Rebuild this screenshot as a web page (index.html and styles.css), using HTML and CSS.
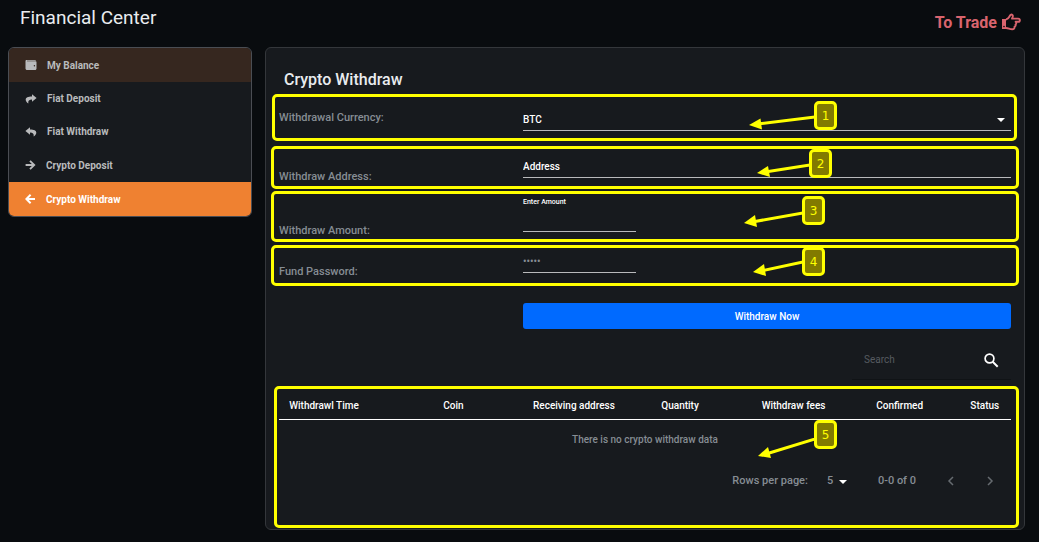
FILE: index.html
```html
<!DOCTYPE html>
<html lang="en">
<head>
<meta charset="utf-8">
<title>Financial Center</title>
<link rel="stylesheet" href="styles.css">
</head>
<body>
<header class="topbar">
  <h1 class="topbar-title">Financial Center</h1>
  <a class="trade-link" href="#">To Trade
    <svg class="hand" viewBox="0 0 20 18" aria-hidden="true"><path d="M1 6h4v10H1z" fill="currentColor"/><path d="M5 6.500C8 6 8 3.500 9.500 2c1.400-1.100 2.800.3 2.200 1.900L11 5.600h6.200c2.200 0 2.200 3.200 0 3.200H14.600c1 .8.9 2.200-.1 2.700.4 1-.1 2-1 2.200.2 1.500-.6 2.600-2.300 2.600C8.500 16.300 7.500 15 5 15" fill="none" stroke="currentColor" stroke-width="1.900" stroke-linejoin="round"/><circle cx="3" cy="13.500" r=".8" fill="#090c0f"/></svg>
  </a>
</header>
<div class="layout">
  <nav class="menu">
    <a class="menu-item menu-head" href="#"><svg class="menu-icon" viewBox="0 0 12 12" aria-hidden="true"><path d="M1.500 1h8.700c.5 0 .8.300.8.800H2v.4h8.500c.6 0 1 .4 1 1v6.300c0 .8-.6 1.500-1.400 1.500h-8C1.200 11 .5 10.300.5 9.500V2.200C.5 1.500.9 1 1.500 1z" fill="currentColor"/><circle cx="9.400" cy="6.800" r=".7" fill="#36271f"/></svg>My Balance</a>
    <a class="menu-item" href="#"><svg class="menu-icon" viewBox="0 0 12 12" aria-hidden="true"><path d="M7 1.200 11.600 5 7 8.800V6.500C4.200 6.500 3 7.500 3.300 10.500 1.800 9.600.7 8.300.7 6.800.7 4.200 3 3.400 7 3.400z" fill="currentColor"/></svg>Fiat Deposit</a>
    <a class="menu-item" href="#"><svg class="menu-icon" viewBox="0 0 12 12" aria-hidden="true"><path d="M5 1.200.4 5 5 8.800V6.500c2.800 0 4 1 3.700 4 1.500-.9 2.600-2.200 2.600-3.700C11.300 4.200 9 3.400 5 3.400z" fill="currentColor"/></svg>Fiat Withdraw</a>
    <a class="menu-item menu-tall" href="#"><svg class="menu-icon menu-icon-narrow" viewBox="0 0 11 12" aria-hidden="true"><path d="M.6 6h8.400M5 1.800 9.200 6 5 10.200" fill="none" stroke="currentColor" stroke-width="1.900"/></svg>Crypto Deposit</a>
    <a class="menu-item menu-tall menu-active" href="#" aria-current="page"><svg class="menu-icon menu-icon-narrow" viewBox="0 0 11 12" aria-hidden="true"><path d="M10 6H1.600M5.600 1.800 1.400 6l4.200 4.200" fill="none" stroke="currentColor" stroke-width="2"/></svg>Crypto Withdraw</a>
  </nav>

  <main class="panel">
    <h2 class="panel-title">Crypto Withdraw</h2>
    <form class="form">
      <div class="row row-currency">
        <label for="currency">Withdrawal Currency:</label>
        <div class="select-wrap">
          <select class="field" id="currency"><option>BTC</option></select>
        </div>
        <div class="mark mark-short">
          <svg class="arrow arrow-1" viewBox="0 0 66 20" aria-hidden="true"><path d="M66 5 8 12" class="shaft"/><path d="M0 13 11.500 6.500 13 17.500z" class="tip"/></svg>
          <span class="badge badge-1">1</span>
        </div>
      </div>
      <div class="row row-address">
        <label for="address">Withdraw Address:</label>
        <input class="field" id="address" type="text" value="Address">
        <div class="mark">
          <svg class="arrow arrow-2" viewBox="0 0 53 20" aria-hidden="true"><path d="M53 5 8 12" class="shaft"/><path d="M0 13 11 6 13 17z" class="tip"/></svg>
          <span class="badge badge-2">2</span>
        </div>
      </div>
      <div class="row row-amount">
        <label for="amount">Withdraw Amount:</label>
        <div class="stack">
          <span class="hint">Enter Amount</span>
          <input class="field field-small" id="amount" type="text">
        </div>
        <div class="mark">
          <svg class="arrow arrow-3" viewBox="0 0 59 20" aria-hidden="true"><path d="M59 3 8 12" class="shaft"/><path d="M0 13 11 5 13 17z" class="tip"/></svg>
          <span class="badge badge-3">3</span>
        </div>
      </div>
      <div class="row row-password">
        <label for="password">Fund Password:</label>
        <input class="field field-small" id="password" type="password" placeholder="•••••">
        <div class="mark">
          <svg class="arrow arrow-4" viewBox="0 0 50 20" aria-hidden="true"><path d="M50 3 8 12" class="shaft"/><path d="M0 13 11 5 13 17z" class="tip"/></svg>
          <span class="badge badge-4">4</span>
        </div>
      </div>
      <div class="row actions"><button class="submit" type="button">Withdraw Now</button></div>
    </form>

    <div class="search">
      <input class="search-input" type="text" placeholder="Search" aria-label="Search">
      <button class="icon-button" type="button" aria-label="Search"><svg class="search-icon" viewBox="0 0 16 16" aria-hidden="true"><circle cx="6.500" cy="6.500" r="4.400" fill="none" stroke="currentColor" stroke-width="1.700"/><path d="m9.700 9.700 5 5" stroke="currentColor" stroke-width="2"/></svg></button>
    </div>

    <section class="history">
      <table class="table">
        <thead><tr><th class="c-time">Withdrawl Time</th><th class="c-coin">Coin</th><th class="c-addr">Receiving address</th><th class="c-qty">Quantity</th><th class="c-fee">Withdraw fees</th><th class="c-conf">Confirmed</th><th class="c-stat">Status</th></tr></thead>
        <tbody><tr><td colspan="7">There is no crypto withdraw data</td></tr></tbody>
      </table>
      <div class="pager">
        <label for="rows">Rows per page:</label>
        <div class="select-wrap rows-wrap"><select class="rows" id="rows"><option>5</option></select></div>
        <span class="range">0-0 of 0</span>
        <button class="page-button" type="button" aria-label="Previous page"><svg viewBox="0 0 8 10" aria-hidden="true"><path d="M6 1 2 5l4 4" fill="none" stroke="currentColor" stroke-width="1.500"/></svg></button>
        <button class="page-button" type="button" aria-label="Next page"><svg viewBox="0 0 8 10" aria-hidden="true"><path d="m2 1 4 4-4 4" fill="none" stroke="currentColor" stroke-width="1.500"/></svg></button>
      </div>
      <div class="mark mark-history">
        <svg class="arrow arrow-5" viewBox="0 0 57 26" aria-hidden="true"><path d="M57 1 8 16" class="shaft"/><path d="M0 18 10 9 13 20z" class="tip"/></svg>
        <span class="badge badge-5">5</span>
      </div>
    </section>
  </main>
</div>
</body>
</html>
```
FILE: styles.css
```css
* { box-sizing: border-box; }
body {
  margin: 0;
  padding: 0 14px 13px 8px;
  background: #090c0f;
  color: #fff;
  font-family: Roboto, "Liberation Sans", sans-serif;
  font-size: 11px;
}
button, input, select { font-family: inherit; }

.topbar {
  display: flex;
  justify-content: space-between;
  height: 47px;
  padding: 6px 4px 0 12px;
}
.topbar-title { margin: 0; font-size: 19px; line-height: 24px; font-weight: 400; color: #e9ecef; }
.trade-link {
  display: flex;
  align-items: center;
  gap: 4px;
  height: 32px;
  color: #d9646e;
  font-size: 16px;
  font-weight: 700;
  text-decoration: none;
}
.hand { width: 20px; height: 18px; }

.layout { display: grid; grid-template-columns: 244px 1fr; gap: 13px; align-items: start; }

.menu {
  overflow: hidden;
  border: 1px solid #4a4d53;
  border-radius: 6px;
  background: #171a1e;
}
.menu-item {
  display: flex;
  align-items: center;
  gap: 10px;
  height: 33px;
  padding-left: 16px;
  color: #b9babc;
  font-size: 10px;
  font-weight: 700;
  text-decoration: none;
}
.menu-icon { width: 12px; height: 12px; }
.menu-icon-narrow { width: 11px; }
.menu-tall { height: 34px; }
.menu-head { height: 34px; background: #36271f; }
.menu-active { background: #ef8131; color: #fff; }

.panel {
  padding: 0 13px;
  border: 1px solid #34373b;
  border-radius: 6px;
  background: #171a1e;
}
.panel-title { margin: 0; padding: 21px 5px 4px; font-size: 16px; line-height: 21px; font-weight: 500; color: #e9ecef; }

.row { position: relative; display: grid; grid-template-columns: 1fr 2fr; align-items: end; }
.row label, .pager { color: #868d94; font-weight: 500; line-height: 14px; }
.row-currency { height: 47px; margin-bottom: 5px; padding-bottom: 10px; }
.row-currency label { padding-bottom: 6px; }
.row-address { height: 43px; margin-bottom: 2px; padding-bottom: 11px; }
.row-amount { height: 51px; margin-bottom: 3px; padding-bottom: 10px; }
.row-password { height: 41px; padding-bottom: 13px; }
.row-address label, .row-amount label, .row-password label { margin-bottom: -6px; }

.field {
  display: block;
  width: 100%;
  height: 22px;
  margin: 0;
  padding: 0;
  border: 0;
  border-bottom: 1px solid #b9babc;
  border-radius: 0;
  outline: 0;
  background: transparent;
  color: #fff;
  font-size: 10px;
  font-weight: 500;
  appearance: none;
}
.field-small { width: 113px; }
.field::placeholder { color: #868d94; opacity: 1; }
.stack { display: flex; flex-direction: column; gap: 4px; }
.hint { font-size: 7px; line-height: 8px; font-weight: 500; }

.select-wrap { position: relative; }
.select-wrap::after {
  content: "";
  position: absolute;
  top: 9px;
  right: 6px;
  border: 4px solid transparent;
  border-top-color: #fff;
  border-bottom: 0;
  pointer-events: none;
}

.actions { padding-top: 17px; }
.submit {
  grid-column: 2;
  height: 26px;
  padding: 0;
  border: 0;
  border-radius: 3px;
  background: #006aff;
  color: #fff;
  font-size: 10px;
  font-weight: 500;
}

.search {
  display: flex;
  align-items: center;
  width: 159px;
  height: 40px;
  margin: 11px 0 0 auto;
  padding: 0 12px;
  border-bottom: 1px solid #101316;
}
.search-input { flex: 1; min-width: 0; padding: 0; border: 0; outline: 0; background: transparent; color: #fff; font-size: 10px; }
.search-input::placeholder { color: #565b60; opacity: 1; }
.icon-button { display: flex; padding: 0; border: 0; background: transparent; color: #fff; }
.search-icon { width: 16px; height: 16px; }

.history { position: relative; margin-top: 6px; padding-bottom: 26px; }
.table { width: 100%; border-collapse: collapse; table-layout: fixed; }
.table th { height: 33px; padding: 8px 0 0; border-bottom: 1px solid #fff; font-size: 10px; line-height: 14px; font-weight: 500; text-align: center; white-space: nowrap; }
.table td { height: 40px; padding: 0; color: #868d94; font-size: 10px; font-weight: 500; text-align: center; }
.table .c-time { width: 90px; }
.table .c-coin { width: 22%; padding-left: 8px; }
.table .c-addr { width: 12%; }
.table .c-qty { width: 17%; }
.table .c-fee { width: 14%; }
.table .c-conf { width: 15%; }
.table .c-stat { padding-left: 4px; }

.pager { display: flex; align-items: center; justify-content: flex-end; height: 44px; padding-right: 17px; }
.rows-wrap { margin-left: 19px; }
.rows-wrap::after { top: 6px; right: 0; }
.rows { width: 20px; height: 14px; padding: 0; border: 0; background: transparent; color: #868d94; font-size: 11px; font-weight: 500; appearance: none; }
.range { margin: 0 31px; }
.page-button { display: flex; padding: 0; border: 0; background: transparent; color: #666b70; }
.page-button + .page-button { margin-left: 31px; }
.page-button svg { width: 8px; height: 10px; }

/* Numbered callouts drawn over the form */
.mark { position: absolute; inset: 0 -8px; border: 3px solid #ff0; border-radius: 5px; pointer-events: none; }
.mark-short { inset: 0 -6px 0 -7px; }
.mark-history { inset: 0 -8px 1px -5px; }
.badge {
  position: absolute;
  width: 23px;
  height: 29px;
  border: 3px solid #ff0;
  border-radius: 5px;
  background: #827a00;
  color: #ff0;
  font: 12px/24px "DejaVu Sans", sans-serif;
  text-align: center;
}
.badge-1 { top: 4px; right: 177px; }
.badge-2 { top: 0; right: 184px; }
.badge-3 { top: 2px; right: 191px; }
.badge-4 { top: -1px; right: 191px; }
.badge-5 { top: 31px; right: 179px; }
.arrow { position: absolute; height: 20px; }
.arrow-1 { top: 15px; right: 199px; width: 66px; }
.arrow-2 { top: 11px; right: 206px; width: 53px; }
.arrow-3 { top: 16px; right: 213px; width: 59px; }
.arrow-4 { top: 11px; right: 213px; width: 50px; }
.arrow-5 { top: 49px; right: 201px; width: 57px; height: 26px; }
.shaft { fill: none; stroke: #ff0; stroke-width: 3; }
.tip { fill: #ff0; }
```
